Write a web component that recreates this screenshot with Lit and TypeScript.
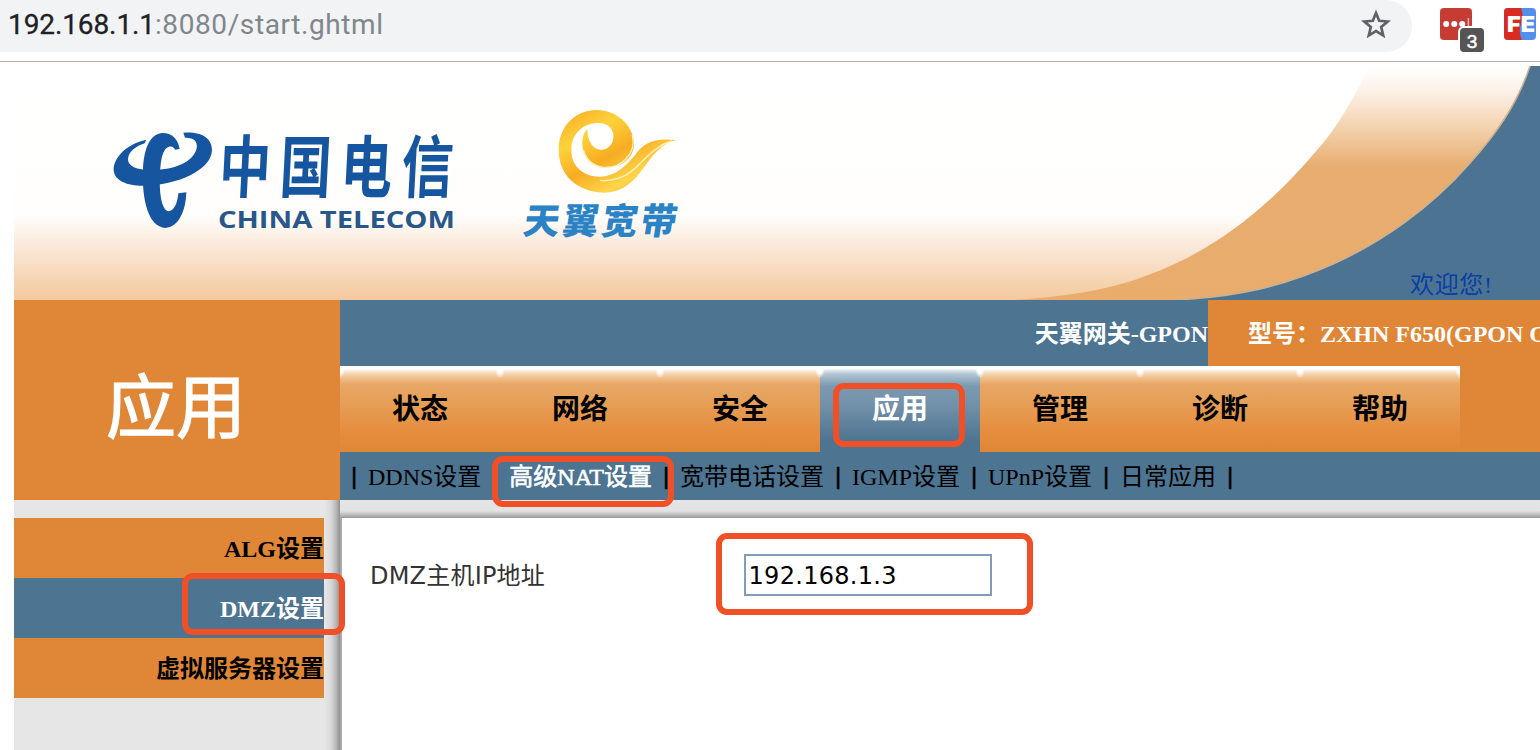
import { LitElement, html, svg, css } from "lit";
import { customElement, state } from "lit/decorators.js";
import { classMap } from "lit/directives/class-map.js";

@customElement("browser-bar")
class BrowserBar extends LitElement {
  static styles = css`
    :host { display: flex; height: 61px; border-bottom: 1px solid #b1b1b3; background: #fff; box-sizing: content-box; }
    .pill { width: 1412px; height: 52px; box-sizing: border-box; background: #f1f3f4; border-radius: 0 26px 26px 0;
      display: flex; align-items: center; justify-content: space-between; padding: 0 20px 3px 8px; }
    .url { font: 28px/40px Roboto, sans-serif; color: #80868b; letter-spacing: 0.6px; white-space: nowrap; }
    .host { color: #202124; letter-spacing: -0.1px; -webkit-text-stroke: 0.3px #202124; }
    .icons { width: 128px; height: 61px; }
    .badge { font: 500 19px "Liberation Sans", sans-serif; fill: #fff; stroke: #fff; stroke-width: 0.5; }
    .fe { font: 900 22px Inter, sans-serif; fill: #fff; }
  `;
  render() {
    return html`
      <div class="pill">
        <span class="url"><span class="host">192.168.1.1</span>:8080/start.ghtml</span>
        <svg width="32" height="32" viewBox="0 0 32 32">
          <path d="M16 4.1 L19.2 11.8 L27.7 12.5 L21.2 18.1 L23.2 26.4 L16 22 L8.8 26.4 L10.8 18.1 L4.3 12.5 L12.8 11.8 Z"
            fill="none" stroke="#5f6368" stroke-width="2.7" />
        </svg>
      </div>
      <svg class="icons" viewBox="1412 0 128 61">
        <rect x="1440" y="8" width="32" height="32" rx="4" fill="#c43c33" />
        <circle cx="1446.2" cy="24" r="3" fill="#fff" /><circle cx="1454.3" cy="24" r="3" fill="#fff" />
        <circle cx="1462.2" cy="24" r="3" fill="#fff" /><path d="M1468.4 18v13" stroke="#eab9b5" stroke-width="1.5" />
        <rect x="1458" y="26" width="28" height="28" rx="6" fill="#fff" />
        <rect x="1460" y="28" width="24" height="24" rx="4" fill="#555" />
        <text class="badge" x="1472" y="48" text-anchor="middle">3</text>
        <rect x="1504" y="8" width="32" height="32" rx="4" fill="#5390ec" />
        <path d="M1508 8h13q3 8 0 16t1 16h-14a4 4 0 0 1-4-4v-24a4 4 0 0 1 4-4z" fill="#d92b22" />
        <text class="fe" x="1507" y="32" textLength="28" lengthAdjust="spacingAndGlyphs">FE</text>
      </svg>
    `;
  }
}

@customElement("site-banner")
class SiteBanner extends LitElement {
  static styles = css`
    :host { display: block; height: 234px; }
    svg { display: block; }
    .brand { font: bold 68px "Noto Sans CJK SC", sans-serif; fill: #1655a0; }
    .latin { font: bold 24px "Open Sans", "Noto Sans", sans-serif; fill: #285889; }
    .tianyi { font: 900 36px "Noto Sans CJK SC", sans-serif; fill: #2b83c6; }
    .welcome { font: 24px "Liberation Serif", "Noto Sans CJK SC", serif; fill: #0b3ea5; }
  `;
  render() {
    return svg`
      <svg width="1526" height="234" viewBox="14 66 1526 234">
        <defs>
          <linearGradient id="sky" x1="0" y1="0" x2="0" y2="1">
            <stop offset="0" stop-color="#fff" /><stop offset=".64" stop-color="#fffefc" />
            <stop offset=".76" stop-color="#fbeadc" /><stop offset="1" stop-color="#f3c99d" />
          </linearGradient>
          <linearGradient id="wing" gradientUnits="userSpaceOnUse" x1="0" y1="66" x2="0" y2="300">
            <stop offset="0" stop-color="#fff" /><stop offset=".1" stop-color="#fdf2ea" />
            <stop offset=".25" stop-color="#f4d5b3" /><stop offset=".43" stop-color="#e8ad70" />
            <stop offset="1" stop-color="#e9ac6c" />
          </linearGradient>
          <linearGradient id="gold" x1="0" y1="0" x2=".8" y2="1">
            <stop offset="0" stop-color="#f5a81f" /><stop offset=".3" stop-color="#ffd23c" />
            <stop offset=".55" stop-color="#f7ac22" /><stop offset=".8" stop-color="#ffd54a" />
            <stop offset="1" stop-color="#f6a51c" />
          </linearGradient>
        </defs>
        <rect x="14" y="66" width="1526" height="234" fill="url(#sky)" />
        <path d="M1370 66 C1352 100 1338 127 1317 150 C1263 214 1205 258 1128 282 C1095 292 1060 297 1015 300 H1540 V66 Z" fill="url(#wing)" />
        <path d="M1530 66 C1517 105 1496 134 1470 163 C1430 209 1380 243 1333 264 C1284 286 1237 297 1175 300 H1540 V66 Z"
          fill="#4c7492" />
        <path d="M1530 66 C1517 105 1496 134 1470 163 C1430 209 1380 243 1333 264 C1284 286 1237 297 1175 300"
          fill="none" stroke="#cbb193" stroke-width="1.6" />
        <g transform="translate(100 100) scale(.33333)" fill="#1655a0">
          <path d="M139 119 C80 132 40 172 41 211 C44 246 90 260 140 257 C230 254 334 212 336 150 C336 112 300 93 250 98 L255 113 C281 112 294 124 290 145 C281 187 220 211 155 210 C110 210 82 198 84 176 C87 153 108 139 134 130 Z" />
          <path d="M239 147 C234 118 218 99 188 99 C150 101 132 145 129 208 C125 300 145 381 196 384 C235 382 257 335 259 277 L235 280 C232 311 223 331 207 334 C184 333 177 275 180 222 C182 174 189 145 207 140 C216 137 223 143 225 149 Z" />
        </g>
        <g transform="translate(218 192) skewX(-3) scale(.76 1)">
          <text class="brand" x="0" y="0" textLength="308" lengthAdjust="spacing">中国电信</text>
        </g>
        <text class="latin" x="218" y="228" textLength="237" lengthAdjust="spacingAndGlyphs">CHINA TELECOM</text>
        <g transform="translate(500 95) scale(.33333)">
          <path d="M528 135 C475 148 450 195 421 232 C390 273 353 294 310 293 C230 290 176 240 176 165 C176 90 230 45 290 45 C350 45 400 90 402 145 C402 195 360 218 315 218 C270 215 245 180 247 140 C248 120 255 110 262 103 C262 140 280 165 305 165 C330 162 342 140 340 120 C338 95 315 82 290 84 C245 86 214 120 214 165 C214 215 250 245 300 245 C350 243 380 210 405 180 C430 145 460 128 528 135 Z" fill="url(#gold)" />
          <path d="M397 120 C410 175 365 221 310 217 C278 213 258 193 250 165 M516 138 C470 150 437 190 405 220 C375 250 330 260 300 256" fill="none" stroke="#fff3bd" stroke-width="4" />
        </g>
        <g transform="translate(522 234) skewX(-9)">
          <text class="tianyi" x="0" y="0" textLength="153" lengthAdjust="spacing">天翼宽带</text>
        </g>
        <text class="welcome" x="1410" y="293" textLength="82">欢迎您!</text>
      </svg>
    `;
  }
}

@customElement("app-root")
class AppRoot extends LitElement {
  @state() private tab = "应用";
  @state() private sub = "高级NAT设置";
  @state() private side = "DMZ设置";

  private tabs = ["状态", "网络", "安全", "应用", "管理", "诊断", "帮助"];
  private subs = ["DDNS设置", "高级NAT设置", "宽带电话设置", "IGMP设置", "UPnP设置", "日常应用"];
  private sides = ["ALG设置", "DMZ设置", "虚拟服务器设置"];

  static styles = css`
    :host { display: block; position: relative; width: 1540px; height: 750px; overflow: hidden; background: #fff;
      font-family: "Liberation Serif", "Noto Sans CJK SC", serif; color: #000; }
    .page { padding: 4px 0 0 14px; }
    .top { display: grid; grid-template-columns: 326px 1200px; height: 200px; }
    .title { background: #e08737; color: #fff; font-size: 70px; line-height: 80px; display: flex; align-items: center;
      justify-content: center; padding: 20px 2px 0 0; -webkit-text-stroke: 1.2px #fff; }
    .right { display: grid; grid-template-rows: 66px 86px 48px; background: #e08737; }
    .info { display: grid; grid-template-columns: 868px 332px; color: #fff; font-size: 24px; line-height: 68px; font-weight: bold;
      white-space: nowrap; height: 66px; overflow: hidden; }
    .gateway { background: #4d7491; text-align: right; }
    .model { padding-left: 40px; overflow: hidden; }
    .tabs { display: flex; width: 1120px; background: #fff; }
    .tab { flex: 1; height: 86px; text-align: center; font-size: 28px; line-height: 88px; font-weight: bold;
      background: radial-gradient(ellipse 5px 9px at 0 3px, #fff 45%, #fff0), radial-gradient(ellipse 5px 9px at 100% 3px, #fff 45%, #fff0),
        linear-gradient(#fff 3px, #f5d2ab 8px, #e8a866 18px, #e6a059 35px, #e58d3e 65px, #e08737); }
    .tab.on { color: #fff;
      background: radial-gradient(ellipse 5px 9px at 0 3px, #fff 45%, #fff0), radial-gradient(ellipse 5px 9px at 100% 3px, #fff 45%, #fff0),
        linear-gradient(#fff 2px, #b2c5d3 8px, #7b99b0 20px, #7290a8 40px, #4d7491 75px); }
    .subs { background: #4d7491; display: flex; font-size: 24px; line-height: 50px; height: 48px; white-space: nowrap; }
    .bar { width: 28px; text-align: center; font: 24px/47px "Liberation Sans", sans-serif; -webkit-text-stroke: 0.5px #000; }
    .sub.on { color: #fff; -webkit-text-stroke: 0.6px #fff; }
    .body { display: grid; grid-template-columns: 326px 1200px; height: 250px; }
    .side { background: linear-gradient(270deg, #8e8e8e, #b9b9b9 4px, #d8d8d8 9px, #e6e6e6 15px); padding: 18px 16px 0 0; }
    .entry { background: #e08737; height: 60px; line-height: 62px; text-align: right; font-size: 24px; font-weight: bold; }
    .entry.on { background: #4d7491; color: #fff; }
    .main { display: grid; grid-template-rows: 18px 1fr; }
    .shade { background: linear-gradient(#e6e6e6, #e2e2e2 11px, #c4c4c4 14px, #999); }
    .form { border-left: 2px solid #aaa; display: flex; align-items: flex-start; padding: 36px 0 0 28px; }
    .label { width: 373.5px; font: 24px/44px "DejaVu Sans", "Noto Sans CJK SC", sans-serif; letter-spacing: 0.2px; color: #333; }
    .field { box-sizing: border-box; width: 248.5px; height: 42px; border: 2px solid #7f9db9; margin: 0; padding: 1px 3px 0;
      border-radius: 0; background: #fff; color: #000; outline: 0; letter-spacing: 0.3px;
      font: 24px "DejaVu Sans", sans-serif; }
    .mark { position: absolute; box-sizing: border-box; border: 6px solid #f15026; border-radius: 11px; }
    .m-tab { left: 833px; top: 383px; width: 132px; height: 64px; }
    .m-sub { left: 492px; top: 456px; width: 182px; height: 51px; }
    .m-side { left: 182px; top: 573px; width: 163px; height: 62px; }
    .m-field { left: 716px; top: 533px; width: 317px; height: 82px; }
  `;

  render() {
    return html`
      <browser-bar></browser-bar>
      <div class="page">
        <site-banner></site-banner>
        <div class="top">
          <div class="title">应用</div>
          <div class="right">
            <div class="info">
              <div class="gateway">天翼网关-GPON</div>
              <div class="model">型号：ZXHN F650(GPON ONU)</div>
            </div>
            <div class="tabs">
              ${this.tabs.map((t) => html`<div class=${classMap({ tab: true, on: t === this.tab })} @click=${() => (this.tab = t)}>${t}</div>`)}
            </div>
            <div class="subs">
              <span class="bar">|</span>
              ${this.subs.map((s) => html`<span class=${classMap({ sub: true, on: s === this.sub })} @click=${() => (this.sub = s)}>${s}</span><span class="bar">|</span>`)}
            </div>
          </div>
        </div>
        <div class="body">
          <div class="side">
            ${this.sides.map((s) => html`<div class=${classMap({ entry: true, on: s === this.side })} @click=${() => (this.side = s)}>${s}</div>`)}
          </div>
          <div class="main">
            <div class="shade"></div>
            <div class="form">
              <span class="label">DMZ主机IP地址</span>
              <input class="field" .value=${"192.168.1.3"} />
            </div>
          </div>
        </div>
      </div>
      <div class="mark m-tab"></div>
      <div class="mark m-sub"></div>
      <div class="mark m-side"></div>
      <div class="mark m-field"></div>
    `;
  }
}
